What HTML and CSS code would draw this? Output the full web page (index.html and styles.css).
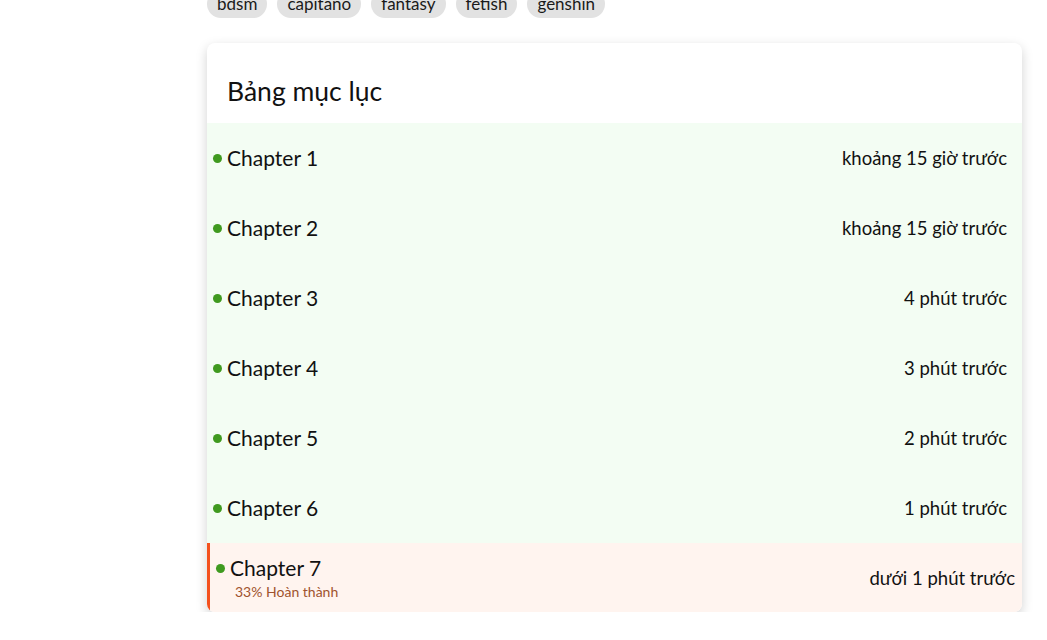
FILE: index.html
```html
<!DOCTYPE html>
<html lang="vi">
<head>
<meta charset="utf-8">
<link rel="stylesheet" href="styles.css">
</head>
<body>
<main class="page">
  <div class="tags">
    <span class="tag">bdsm</span>
    <span class="tag">capitano</span>
    <span class="tag">fantasy</span>
    <span class="tag">fetish</span>
    <span class="tag">genshin</span>
  </div>
  <section class="toc">
    <h2 class="toc-title">Bảng mục lục</h2>
    <ul class="chapters">
      <li class="chapter"><span class="dot"></span><span class="name">Chapter 1</span><span class="time">khoảng 15 giờ trước</span></li>
      <li class="chapter"><span class="dot"></span><span class="name">Chapter 2</span><span class="time">khoảng 15 giờ trước</span></li>
      <li class="chapter"><span class="dot"></span><span class="name">Chapter 3</span><span class="time">4 phút trước</span></li>
      <li class="chapter"><span class="dot"></span><span class="name">Chapter 4</span><span class="time">3 phút trước</span></li>
      <li class="chapter"><span class="dot"></span><span class="name">Chapter 5</span><span class="time">2 phút trước</span></li>
      <li class="chapter"><span class="dot"></span><span class="name">Chapter 6</span><span class="time">1 phút trước</span></li>
      <li class="chapter current">
        <div class="info">
          <div class="line"><span class="dot"></span><span class="name">Chapter 7</span></div>
          <span class="progress">33% Hoàn thành</span>
        </div>
        <span class="time">dưới 1 phút trước</span>
      </li>
    </ul>
  </section>
</main>
</body>
</html>
```
FILE: styles.css
```css
html, body {
  margin: 0;
  padding: 0;
  background: #fff;
}
body {
  font-family: "Lato", "Noto Sans", sans-serif;
  color: #1a1a1a;
  overflow: hidden;
}
.page {
  margin-left: 207px;
  width: 815px;
}
.tags {
  display: flex;
  gap: 10px;
  margin-top: -10px;
  height: 28px;
}
.tag {
  background: #e2e2e2;
  border-radius: 14px;
  padding: 0 10px;
  height: 28px;
  line-height: 27px;
  font-size: 17px;
  color: #1a1a1a;
}
.toc {
  margin-top: 25px;
  background: #fff;
  border-radius: 8px;
  box-shadow: 0 4px 12px rgba(0,0,0,0.18);
  overflow: hidden;
}
.toc-title {
  margin: 0;
  height: 80px;
  box-sizing: border-box;
  padding: 31px 20px 0;
  font-size: 26.5px;
  font-weight: 400;
  line-height: 34px;
  color: #111;
}
.chapters {
  list-style: none;
  margin: 0;
  padding: 0;
}
.chapter {
  display: flex;
  align-items: center;
  height: 70px;
  box-sizing: border-box;
  padding: 0 15px 0 6px;
  background: #f3fdf3;
  font-size: 21px;
}
.dot {
  width: 9px;
  height: 9px;
  border-radius: 50%;
  background: #3f9a1f;
  margin-right: 5px;
  flex: none;
}
.name {
  flex: 1;
  color: #111;
  line-height: 26px;
}
.chapter > .name {
  margin-top: -1px;
}
.time {
  font-size: 18.5px;
  color: #111;
}
.chapter.current {
  height: 69px;
  background: #fff4ef;
  border-left: 3px solid #f4511e;
  padding: 0 7px 0 6px;
}
.info {
  flex: 1;
  display: flex;
  flex-direction: column;
  padding-top: 0;
}
.line {
  display: flex;
  align-items: center;
}
.line .name { flex: none; }
.progress {
  font-size: 14px;
  color: #a0522d;
  margin-left: 19px;
  margin-top: 2px;
}
```
